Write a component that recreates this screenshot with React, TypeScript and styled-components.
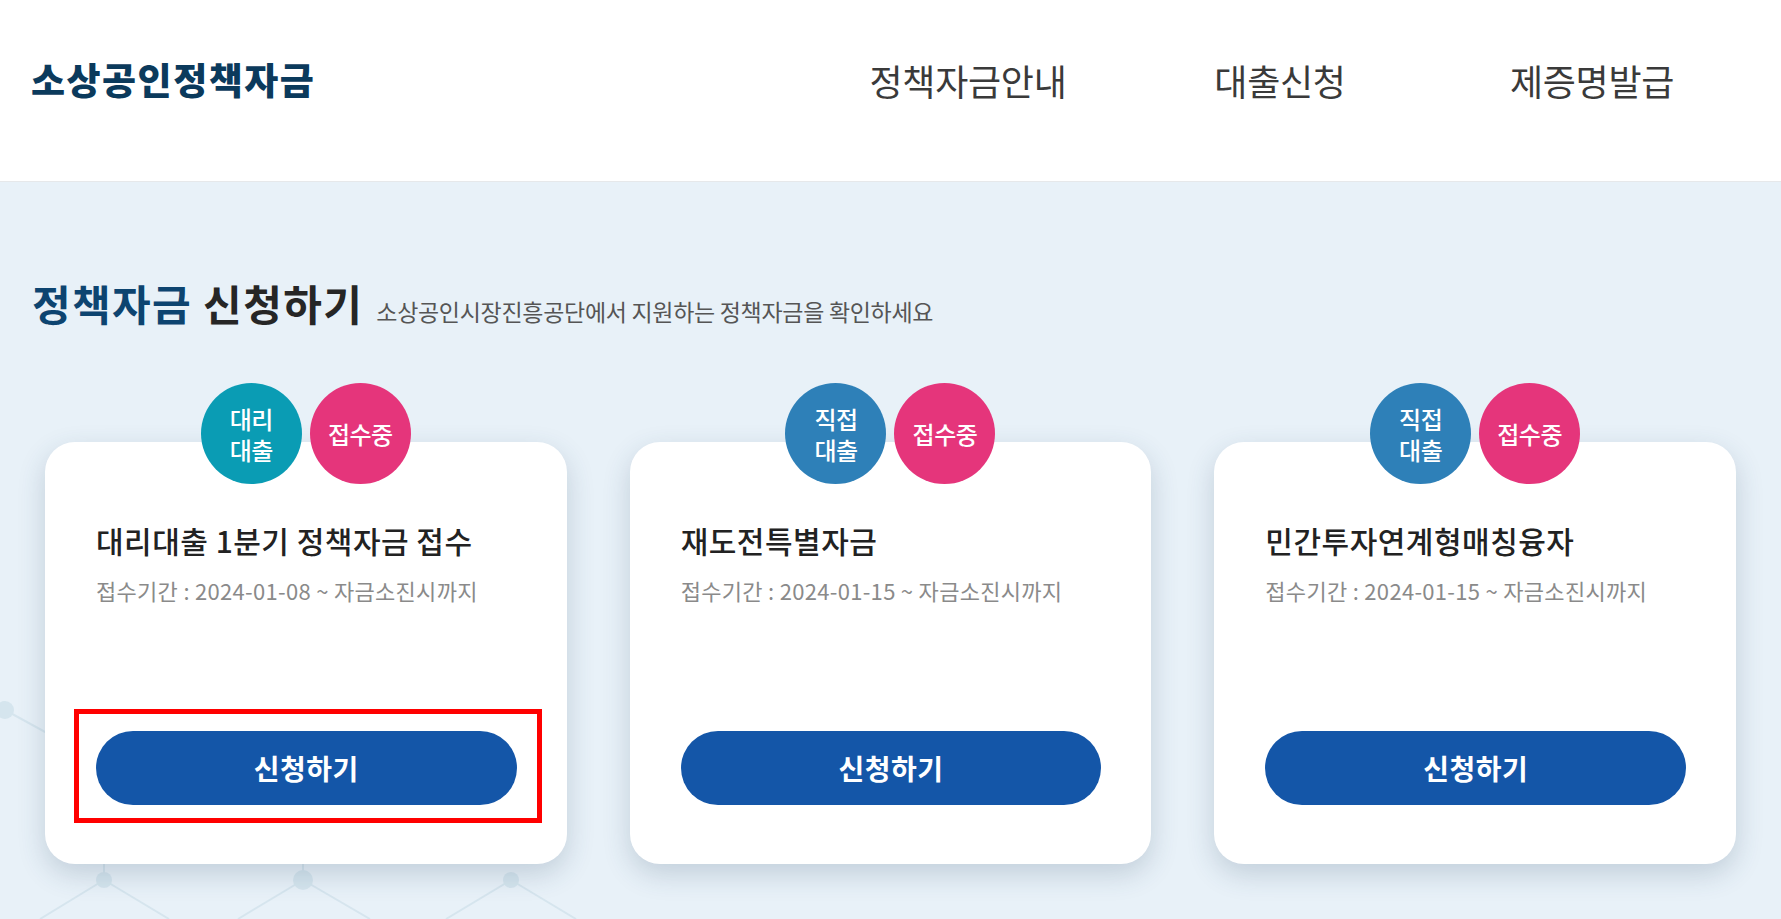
import React from "react";
import styled, { createGlobalStyle } from "styled-components";

const GlobalStyle = createGlobalStyle`
  html, body {
    margin: 0;
    padding: 0;
    background: #e8f1f8;
  }
  body {
    font-family: "Noto Sans CJK KR", "Noto Sans", sans-serif;
    color: #222;
  }
  * {
    box-sizing: border-box;
  }
`;

type Fund = {
  id: number;
  kind: "agent" | "direct";
  title: string;
  period: string;
};

const FUNDS: Fund[] = [
  { id: 1, kind: "agent", title: "대리대출 1분기 정책자금 접수", period: "접수기간 : 2024-01-08 ~ 자금소진시까지" },
  { id: 2, kind: "direct", title: "재도전특별자금", period: "접수기간 : 2024-01-15 ~ 자금소진시까지" },
  { id: 3, kind: "direct", title: "민간투자연계형매칭융자", period: "접수기간 : 2024-01-15 ~ 자금소진시까지" },
];

const NAV = ["정책자금안내", "대출신청", "제증명발급"];

function App() {
  return (
    <Page>
      <GlobalStyle />
      <Header>
        <Logo>소상공인정책자금</Logo>
        <Nav>
          {NAV.map((n) => (
            <NavItem key={n}>{n}</NavItem>
          ))}
        </Nav>
      </Header>
      <Main>
        <Network viewBox="0 0 700 400" aria-hidden="true">
          <g stroke="#d6e5ee" strokeWidth="2" fill="none">
            <line x1="5" y1="191" x2="140" y2="265" />
            <line x1="104" y1="361" x2="104" y2="330" />
            <line x1="104" y1="361" x2="40" y2="400" />
            <line x1="104" y1="361" x2="169" y2="400" />
            <line x1="303" y1="361" x2="303" y2="330" />
            <line x1="303" y1="361" x2="238" y2="400" />
            <line x1="303" y1="361" x2="370" y2="400" />
            <line x1="511" y1="361" x2="446" y2="400" />
            <line x1="511" y1="361" x2="576" y2="400" />
          </g>
          <g fill="#d5e5ee">
            <circle cx="5" cy="191" r="9" />
            <circle cx="104" cy="361" r="8" />
            <circle cx="303" cy="361" r="10" />
            <circle cx="511" cy="361" r="8" />
          </g>
        </Network>
        <Heading>
          <HeadingTitle>
            <Accent>정책자금</Accent> 신청하기
          </HeadingTitle>
          <HeadingSub>소상공인시장진흥공단에서 지원하는 정책자금을 확인하세요</HeadingSub>
        </Heading>
        <CardGrid>
          {FUNDS.map((f, i) => (
            <Card key={f.id}>
              <Badges>
                <Badge $color={f.kind === "agent" ? "#0a9cb4" : "#2e80b8"}>
                  {f.kind === "agent" ? "대리" : "직접"}
                  <br />
                  대출
                </Badge>
                <Badge $color="#e5357b">접수중</Badge>
              </Badges>
              <CardTitle>{f.title}</CardTitle>
              <Period>{f.period}</Period>
              <ButtonWrap>
                <ApplyButton>신청하기</ApplyButton>
                {i === 0 && <Highlight />}
              </ButtonWrap>
            </Card>
          ))}
        </CardGrid>
      </Main>
    </Page>
  );
}

export default App;

const Page = styled.div`
  width: 1781px;
  height: 919px;
  overflow: hidden;
  display: flex;
  flex-direction: column;
`;

const Header = styled.header`
  height: 182px;
  flex: none;
  background: #fff;
  border-bottom: 1px solid #e6e8ea;
  display: flex;
  align-items: flex-start;
  justify-content: space-between;
  padding: 54px 33px 0 31px;
`;

const Logo = styled.h1`
  margin: 0;
  font-size: 37px;
  line-height: 50px;
  font-weight: 900;
  letter-spacing: 1.5px;
  color: #0b3a5c;
`;

const Nav = styled.nav`
  display: flex;
`;

const NavItem = styled.a`
  width: 312px;
  text-align: center;
  font-size: 36px;
  line-height: 52px;
  font-weight: 400;
  letter-spacing: -0.3px;
  color: #3a3a3a;
  cursor: pointer;
`;

const Main = styled.main`
  position: relative;
  flex: 1;
  background: #e8f1f8;
  padding: 93px 45px 0;
`;

const Network = styled.svg`
  position: absolute;
  left: 0;
  bottom: 0;
  width: 700px;
  height: 400px;
  pointer-events: none;
`;

const Heading = styled.div`
  position: relative;
  display: flex;
  align-items: baseline;
  gap: 13px;
  margin-left: -13px;
`;

const HeadingTitle = styled.h2`
  margin: 0;
  font-size: 42px;
  line-height: 56px;
  font-weight: 700;
  letter-spacing: 1.4px;
  color: #262626;
`;

const Accent = styled.span`
  color: #0d4470;
`;

const HeadingSub = styled.p`
  margin: 0;
  font-size: 23px;
  letter-spacing: -0.3px;
  color: #555;
`;

const CardGrid = styled.div`
  position: relative;
  display: grid;
  grid-template-columns: repeat(3, 1fr);
  gap: 63px;
  margin-top: 111px;
`;

const Card = styled.div`
  position: relative;
  height: 422px;
  background: #fff;
  border-radius: 30px;
  box-shadow: 0 10px 28px rgba(40, 70, 100, 0.2);
  padding: 77px 50px 59px 51px;
  display: flex;
  flex-direction: column;
`;

const Badges = styled.div`
  position: absolute;
  top: -59px;
  left: 50%;
  transform: translateX(-50%);
  display: flex;
  gap: 8px;
`;

const Badge = styled.div<{ $color: string }>`
  width: 101px;
  height: 101px;
  border-radius: 50%;
  background: ${(p) => p.$color};
  color: #fff;
  display: flex;
  align-items: center;
  justify-content: center;
  text-align: center;
  font-size: 24px;
  line-height: 31px;
  font-weight: 500;
  letter-spacing: -0.5px;
`;

const CardTitle = styled.h3`
  margin: 0;
  font-size: 30px;
  line-height: 42px;
  font-weight: 500;
  letter-spacing: 0.5px;
  color: #222;
`;

const Period = styled.p`
  margin: 14px 0 0;
  font-size: 22px;
  line-height: 30px;
  letter-spacing: 0.3px;
  color: #8a8a8a;
`;

const ButtonWrap = styled.div`
  position: relative;
  margin-top: auto;
`;

const ApplyButton = styled.button`
  display: block;
  width: 100%;
  height: 74px;
  border: none;
  border-radius: 37px;
  background: #1456a8;
  color: #fff;
  font-family: inherit;
  font-size: 28px;
  font-weight: 700;
  letter-spacing: 0.5px;
  cursor: pointer;
`;

const Highlight = styled.div`
  position: absolute;
  top: -22px;
  left: -22px;
  right: -25px;
  bottom: -18px;
  border: 5px solid #ff0000;
  pointer-events: none;
`;
